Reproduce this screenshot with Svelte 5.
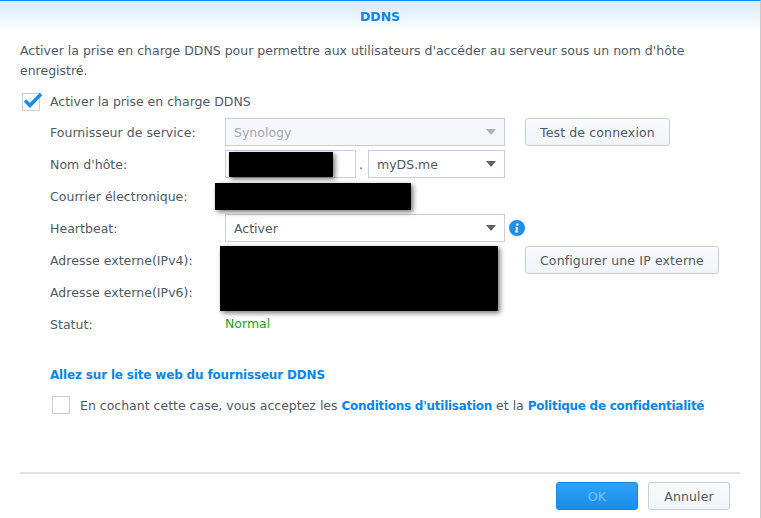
<script>
	const rows = [
		{ label: 'Fournisseur de service:' },
		{ label: "Nom d'hôte:" },
		{ label: 'Courrier électronique:' },
		{ label: 'Heartbeat:' },
		{ label: 'Adresse externe(IPv4):' },
		{ label: 'Adresse externe(IPv6):' }
	];
</script>

{#snippet arrow(muted)}
	<svg class="arrow" class:muted width="14" height="7" viewBox="0 0 14 7"><path d="M2 0h10L7 6z" /></svg>
{/snippet}

<div class="dialog">
	<header>DDNS</header>

	<main>
		<p class="intro">
			Activer la prise en charge DDNS pour permettre aux utilisateurs d'accéder au serveur sous un nom d'hôte enregistré.
		</p>

		<div class="check-row enable">
			<span class="box">
				<svg width="22" height="18" viewBox="0 0 22 18"><path d="M4 9.5 9 14.5 20 3" fill="none" stroke="#0a8cf0" stroke-width="3.4" /></svg>
			</span>
			<span class="enable-text">Activer la prise en charge DDNS</span>
		</div>

		<div class="form">
			<div class="row">
				<span class="label">{rows[0].label}</span>
				<div class="select wide disabled"><span>Synology</span>{@render arrow(true)}</div>
				<button class="btn">Test de connexion</button>
			</div>
			<div class="row">
				<span class="label">{rows[1].label}</span>
				<div class="host">
					<div class="input"></div>
					<span class="dot">.</span>
					<div class="select domain"><span>myDS.me</span>{@render arrow(false)}</div>
				</div>
			</div>
			<div class="row">
				<span class="label">{rows[2].label}</span>
			</div>
			<div class="row">
				<span class="label">{rows[3].label}</span>
				<div class="select wide"><span>Activer</span>{@render arrow(false)}</div>
				<svg class="info" width="16" height="16" viewBox="0 0 16 16">
					<circle cx="8" cy="8" r="8" fill="#1f8fe8" />
					<path d="M7.4 3.6h2.2l-.3 1.8H7.1zM6.6 7h2.6l-.9 4.3h.9l-.2 1.2H6.2l.9-4.4h-.8z" fill="#fff" />
				</svg>
			</div>
			<div class="row">
				<span class="label">{rows[4].label}</span>
				<span class="spacer"></span>
				<button class="btn">Configurer une IP externe</button>
			</div>
			<div class="row">
				<span class="label">{rows[5].label}</span>
			</div>
			<div class="row">
				<span class="label">Statut:</span>
				<span class="status">Normal</span>
			</div>
		</div>

		<a class="link provider" href="#provider">Allez sur le site web du fournisseur DDNS</a>

		<div class="check-row terms">
			<span class="box"></span>
			<span>En cochant cette case, vous acceptez les <a class="link" href="#terms">Conditions d'utilisation</a> et la <a class="link" href="#privacy">Politique de confidentialité</a></span>
		</div>
	</main>

	<footer>
		<button class="btn action primary">OK</button>
		<button class="btn action">Annuler</button>
	</footer>

	<!-- censored areas in the screenshot -->
	<div class="mask m1"></div>
	<div class="mask m2"></div>
	<div class="mask m3"></div>
</div>

<style>
	:global(body) {
		margin: 0;
		background: #fff;
	}

	.dialog {
		position: relative;
		width: 761px;
		height: 518px;
		box-sizing: border-box;
		display: flex;
		flex-direction: column;
		border-top: 1px solid #0a8ce8;
		border-right: 1px solid #c9c9c9;
		font-family: 'DejaVu Sans', Verdana, sans-serif;
		font-size: 12.5px;
		color: #505a64;
		overflow: hidden;
	}

	header {
		height: 31px;
		flex: none;
		display: flex;
		align-items: center;
		justify-content: center;
		background: linear-gradient(to bottom, #d6eafb, #ffffff);
		color: #0a86e8;
		font-weight: bold;
	}

	main {
		flex: 1;
		padding: 9px 20px 0;
	}

	.intro {
		margin: 0;
		line-height: 20px;
		width: 700px;
	}

	.check-row {
		display: flex;
		align-items: center;
		gap: 10px;
	}

	.enable {
		margin: 12px 0 0 2px;
		height: 18px;
	}

	.enable-text {
		position: relative;
		top: -1px;
	}

	.box {
		width: 16px;
		height: 16px;
		flex: none;
		border: 1px solid #c5d0dc;
		position: relative;
		background: #fff;
	}

	.box svg {
		position: absolute;
		left: -2px;
		top: -3px;
	}

	.form {
		margin: 7px 0 0 30px;
	}

	.row {
		height: 28px;
		margin-bottom: 4px;
		display: flex;
		align-items: center;
	}

	.label {
		width: 175px;
		flex: none;
		letter-spacing: 0.03px;
	}

	.select,
	.input {
		box-sizing: border-box;
		height: 28px;
		border: 1px solid #c5d0dc;
		background: #fff;
		display: flex;
		align-items: center;
		justify-content: space-between;
		padding: 0 8px;
	}

	.wide {
		width: 280px;
	}

	.disabled {
		background: #f5f7fa;
		color: #a0a8b0;
	}

	.host {
		display: flex;
		align-items: center;
		width: 280px;
	}

	.input {
		width: 131px;
	}

	.dot {
		width: 12px;
		text-align: center;
		margin-left: -1px;
		margin-right: 1px;
	}

	.domain {
		width: 137px;
	}

	.arrow {
		flex: none;
		margin-right: -2px;
		fill: #5b6570;
	}

	.arrow.muted {
		fill: #a9b0b8;
	}

	.info {
		margin-left: 4px;
	}

	.spacer {
		width: 280px;
	}

	.btn {
		box-sizing: border-box;
		height: 28px;
		margin-left: 20px;
		padding: 0 14px;
		border: 1px solid #c5d0dc;
		border-radius: 3px;
		background: linear-gradient(to bottom, #f9fbfd, #f0f4f8);
		color: #505a64;
		font: inherit;
		letter-spacing: 0.14px;
	}

	.status {
		color: #1aa51a;
		position: relative;
		top: -1px;
	}

	.link {
		color: #0a86e8;
		font-weight: bold;
		font-size: 12px;
		letter-spacing: -0.17px;
		text-decoration: none;
	}

	.provider {
		display: block;
		margin: 30px 0 0 30px;
	}

	.terms {
		margin: 14px 0 0 32px;
		height: 18px;
	}

	.terms .link {
		letter-spacing: -0.27px;
	}

	footer {
		height: 36px;
		flex: none;
		margin: 0 20px;
		padding-top: 8px;
		border-top: 2px solid #e0e2e4;
		display: flex;
		justify-content: flex-end;
		gap: 10px;
		padding-right: 10px;
	}

	.action {
		width: 82px;
		margin: 0;
		padding: 0;
	}

	.primary {
		background: linear-gradient(to bottom, #2ea3f8, #1a8ce8);
		border-color: #1a86e0;
		color: #7cc2f5;
	}

	.mask {
		position: absolute;
		background: #000;
		box-shadow: 2px 2px 5px rgba(0, 0, 0, 0.55);
	}

	.m1 {
		left: 229px;
		top: 151px;
		width: 104px;
		height: 25px;
	}

	.m2 {
		left: 215px;
		top: 182px;
		width: 196px;
		height: 27px;
	}

	.m3 {
		left: 220px;
		top: 245px;
		width: 278px;
		height: 65px;
	}
</style>
